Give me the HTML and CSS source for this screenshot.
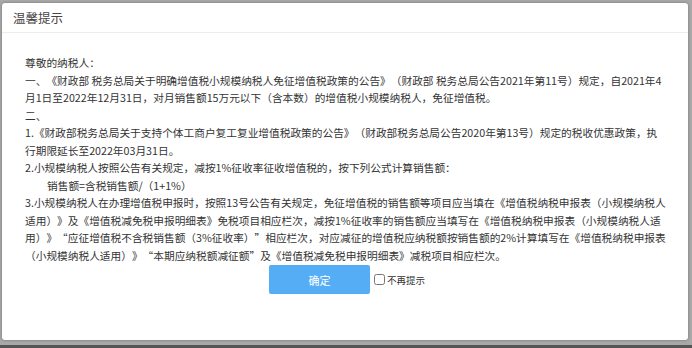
FILE: index.html
```html
<!DOCTYPE html>
<html lang="zh-CN">
<head>
    <title>温馨提示</title>
    <link rel="stylesheet" href="styles.css">
</head>
<body>
<div class="mask">
    <div class="dialog">
        <div class="dialog-header">温馨提示</div>
        <div class="dialog-body">
            <p>尊敬的纳税人：</p>
            <p>一、《财政部 税务总局关于明确增值税小规模纳税人免征增值税政策的公告》（财政部 税务总局公告2021年第11号）规定，自2021年4月1日至2022年12月31日，对月销售额15万元以下（含本数）的增值税小规模纳税人，免征增值税。</p>
            <p>二、</p>
            <p>1.《财政部税务总局关于支持个体工商户复工复业增值税政策的公告》（财政部税务总局公告2020年第13号）规定的税收优惠政策，执行期限延长至2022年03月31日。</p>
            <p>2.小规模纳税人按照公告有关规定，减按1%征收率征收增值税的，按下列公式计算销售额：</p>
            <p class="indent">销售额=含税销售额/（1+1%）</p>
            <p>3.小规模纳税人在办理增值税申报时，按照13号公告有关规定，免征增值税的销售额等项目应当填在《增值税纳税申报表（小规模纳税人适用）》及《增值税减免税申报明细表》免税项目相应栏次，减按1%征收率的销售额应当填写在《增值税纳税申报表（小规模纳税人适用）》“应征增值税不含税销售额（3%征收率）”相应栏次，对应减征的增值税应纳税额按销售额的2%计算填写在《增值税纳税申报表（小规模纳税人适用）》“本期应纳税额减征额”及《增值税减免税申报明细表》减税项目相应栏次。</p>
        </div>
        <div class="dialog-footer">
            <button type="button" class="okbtn">确定</button>
            <label class="nomore"><input type="checkbox"><span>不再提示</span></label>
        </div>
    </div>
</div>
</body>
</html>
```

FILE: styles.css
```css
* {
    box-sizing: border-box;
}

body {
    margin: 0;
    background: #8a8a8a;
    font-family: "Noto Sans CJK SC", "Liberation Sans", sans-serif;
    text-spacing-trim: space-all;
}

/* gray overlay around the dialog */
.mask {
    height: 348px;
    padding: 3px 4px 5px 2px;
    background: #a9a9a9;
    border-bottom: 3px solid #555;
}

.dialog {
    height: 100%;
    background: #fff;
    border-radius: 3px;
    box-shadow: 0 0 3px rgba(0, 0, 0, 0.35);
    display: flex;
    flex-direction: column;
}

.dialog-header {
    height: 30px;
    line-height: 29px;
    padding-left: 11px;
    font-size: 12.5px;
    color: #444;
    border-bottom: 1px solid #ececec;
}

.dialog-body {
    padding: 21px 21px 0 23px;
    font-size: 10.7px;
    line-height: 17.5px;
    color: #333;
}

.dialog-body p {
    margin: 0;
}

.dialog-body .indent {
    padding-left: 22px;
}

.dialog-footer {
    display: flex;
    justify-content: center;
    align-items: center;
    margin-top: 1px;
    padding-left: 4px;
}

.okbtn {
    width: 101px;
    height: 29px;
    border: none;
    border-radius: 2px;
    background-color: #55aef5;
    color: #fff;
    font-family: inherit;
    font-size: 11px;
}

.nomore {
    display: flex;
    align-items: center;
    margin-left: 4px;
    font-size: 9.5px;
    color: #333;
}

.nomore input {
    width: 11px;
    height: 11px;
    margin: 0 2px 0 0;
}
```
